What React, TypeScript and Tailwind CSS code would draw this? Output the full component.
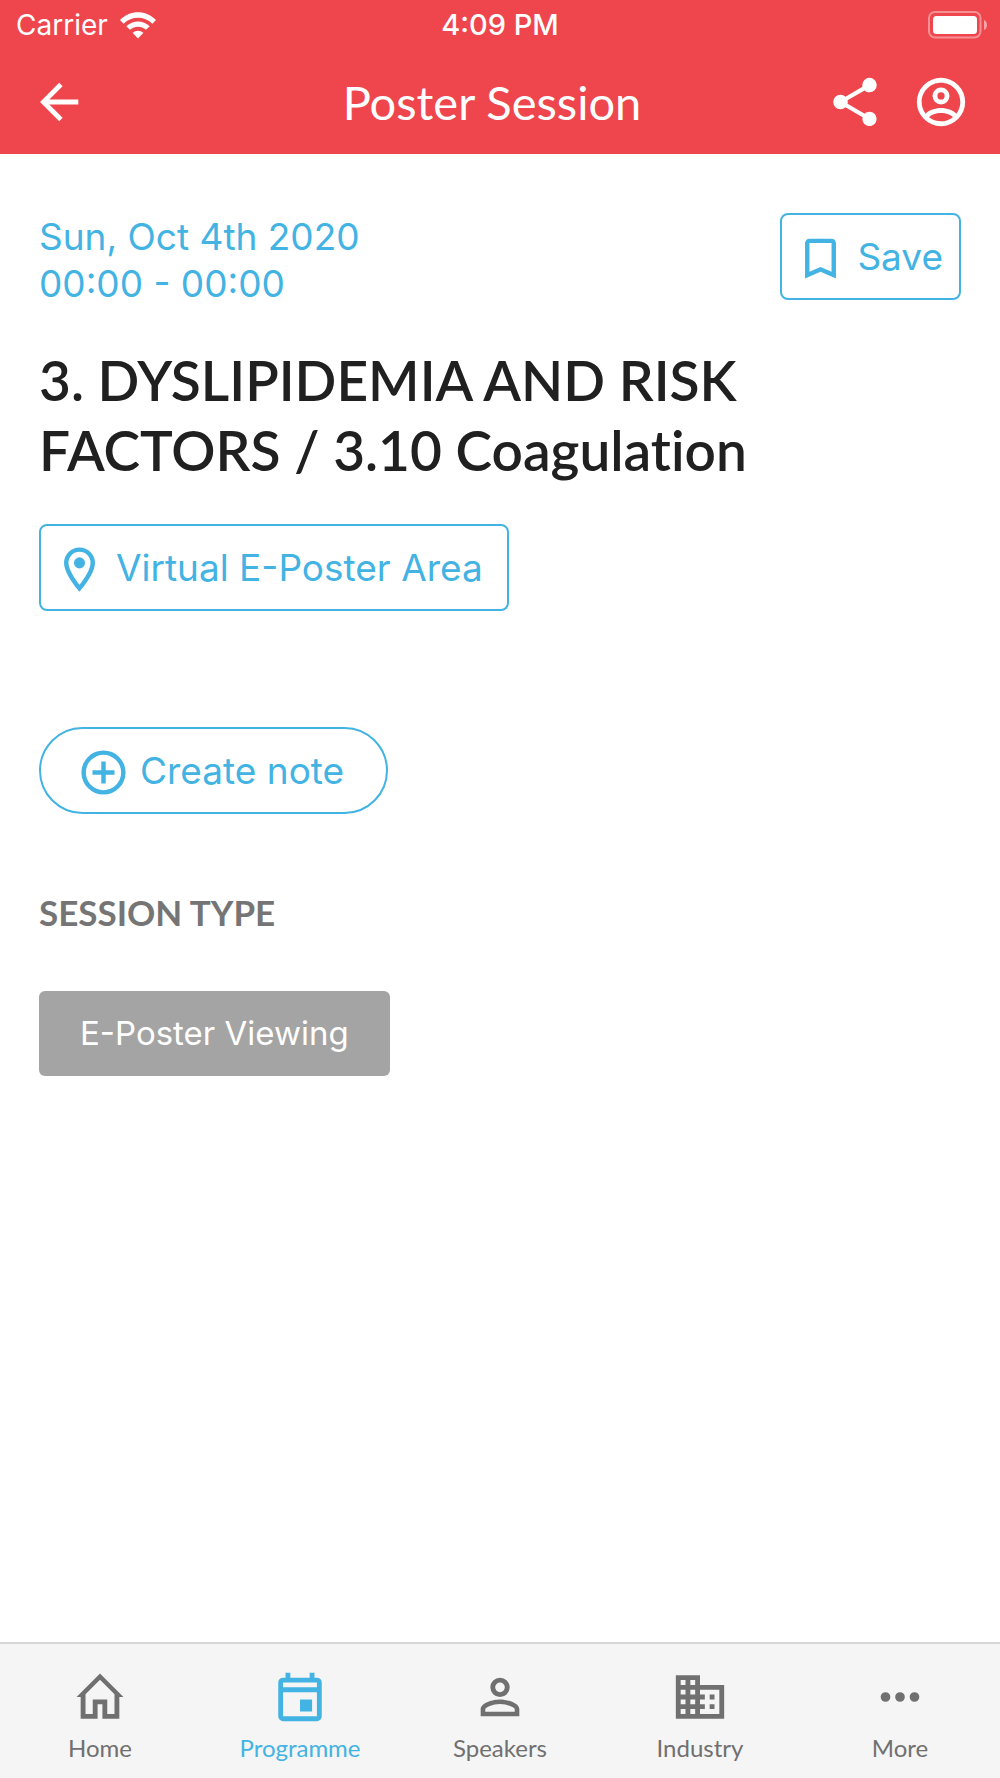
import React from 'react';

interface IconProps {
  path: string;
  className: string;
}

const Icon: React.FC<IconProps> = ({ path, className }) => (
  <svg viewBox="0 0 24 24" fill="currentColor" fillRule="evenodd" aria-hidden="true" className={className}>
    <path d={path} />
  </svg>
);

const icons = {
  back: 'M20 11v2H8l5.5 5.5-1.42 1.42L4.16 12l7.92-7.92L13.5 5.5 8 11z',
  share:
    'M18 16.08c-.76 0-1.44.3-1.96.77L8.91 12.7c.05-.23.09-.46.09-.7s-.04-.47-.09-.7l7.05-4.11c.54.5 1.25.81 2.04.81a3 3 0 1 0-3-3c0 .24.04.47.09.7L8.04 9.81C7.5 9.31 6.79 9 6 9a3 3 0 1 0 0 6c.79 0 1.5-.31 2.04-.81l7.12 4.15c-.05.21-.08.43-.08.66 0 1.61 1.31 2.92 2.92 2.92s2.92-1.31 2.92-2.92-1.31-2.92-2.92-2.92z',
  account:
    'M12 2a10 10 0 1 0 0 20 10 10 0 0 0 0-20zM7.07 18.28C7.5 17.38 10.12 16.5 12 16.5s4.5.88 4.93 1.78A7.9 7.9 0 0 1 12 20c-1.86 0-3.57-.64-4.93-1.72zM18.36 16.83c-1.43-1.74-4.9-2.33-6.36-2.33s-4.93.59-6.36 2.33A7.93 7.93 0 0 1 4 12c0-4.41 3.59-8 8-8s8 3.59 8 8c0 1.82-.62 3.5-1.64 4.83zM12 6a3.5 3.5 0 1 0 0 7 3.5 3.5 0 0 0 0-7zM12 11a1.5 1.5 0 1 1 0-3 1.5 1.5 0 0 1 0 3z',
  bookmark: 'M17 18l-5-2.18L7 18V5h10zM17 3H7a2 2 0 0 0-2 2v16l7-3 7 3V5a2 2 0 0 0-2-2z',
  pin: 'M12 2a7 7 0 0 0-7 7c0 5.25 7 13 7 13s7-7.75 7-13a7 7 0 0 0-7-7zM7 9a5 5 0 0 1 10 0c0 2.88-2.88 7.19-5 9.88C9.92 16.21 7 11.85 7 9zM12 6.5a2.5 2.5 0 1 0 0 5 2.5 2.5 0 0 0 0-5z',
  plus: 'M12 2a10 10 0 1 0 0 20 10 10 0 0 0 0-20zM12 4a8 8 0 1 1 0 16 8 8 0 0 1 0-16zM11 7v4H7v2h4v4h2v-4h4v-2h-4V7z',
  home: 'M12 2.3l9.7 9.7H20v9h-7v-6h-2v6H4v-9H2.3zM12 4.900L6 10.900V19H9V13H15V19H18V10.900z',
  programme:
    'M6 2v2H5a2 2 0 0 0-2 2v14a2 2 0 0 0 2 2h14a2 2 0 0 0 2-2V6a2 2 0 0 0-2-2h-1V2h-2v2H8V2zM5 6h14v2H5zM5 10h14v10H5zM12 13h5v5h-5z',
  speakers:
    'M12 4a4 4 0 1 0 0 8 4 4 0 0 0 0-8zM12 6a2 2 0 1 1 0 4 2 2 0 0 1 0-4zM12 13c2.67 0 8 1.33 8 4v3H4v-3c0-2.67 5.33-4 8-4zM12 14.9c-2.97 0-6.1 1.46-6.1 2.1v1.1h12.2V17c0-.64-3.13-2.1-6.1-2.1z',
  industry:
    'M2 3v18h20V7H12V3zM4 5h2v2H4zM8 5h2v2H8zM4 9h2v2H4zM8 9h2v2H8zM4 13h2v2H4zM8 13h2v2H8zM4 17h2v2H4zM8 17h2v2H8zM12 9h8v10h-8v-2h2v-2h-2v-2h2v-2h-2zM16 11h2v2h-2zM16 15h2v2h-2z',
  more: 'M4 12a2 2 0 1 0 4 0 2 2 0 0 0-4 0zM10 12a2 2 0 1 0 4 0 2 2 0 0 0-4 0zM16 12a2 2 0 1 0 4 0 2 2 0 0 0-4 0z',
};

const tabs = [
  { label: 'Home', icon: icons.home, active: false },
  { label: 'Programme', icon: icons.programme, active: true },
  { label: 'Speakers', icon: icons.speakers, active: false },
  { label: 'Industry', icon: icons.industry, active: false },
  { label: 'More', icon: icons.more, active: false },
];

const StatusBar: React.FC = () => (
  <div className="grid grid-cols-3 items-center h-[50px] px-3 text-[28px]">
    <div className="flex items-center gap-3 pl-1">
      <span>Carrier</span>
      <svg viewBox="0 0 36 27" className="w-9 h-[27px]" aria-hidden="true">
        <path fill="currentColor" d="M0 8C10-2.4 26-2.4 36 8l-3.600 3.700C24.200 3.800 11.800 3.800 3.600 11.700z" />
        <path fill="currentColor" d="M6.300 14.200c6.600-6.300 16.800-6.300 23.400 0L26 17.800c-4.600-4.200-11.400-4.200-16 0z" />
        <path fill="currentColor" d="M12.600 20.800c3.200-2.800 7.600-2.800 10.800 0L18 26.500z" />
      </svg>
    </div>
    <span className="text-center text-[29px] font-medium whitespace-nowrap">4:09 PM</span>
    <svg viewBox="0 0 60 28" className="w-[60px] h-7 justify-self-end" aria-hidden="true">
      <rect x="1" y="1" width="51.500" height="25.500" rx="6" fill="none" stroke="currentColor" strokeOpacity="0.4" strokeWidth="2" />
      <rect x="5" y="5" width="44" height="18" rx="3.500" fill="currentColor" />
      <path d="M56 9c4 1.500 4 8.500 0 10z" fill="currentColor" fillOpacity="0.5" />
    </svg>
  </div>
);

const App: React.FC = () => {
  return (
    <div className="min-h-screen flex flex-col bg-white font-[Inter,sans-serif] text-[#43b3e3]">
      <header className="bg-[#ef464d] text-white">
        <StatusBar />
        <div className="grid grid-cols-[1fr_auto_1fr] items-center h-[104px] pl-3.5 pr-[30px]">
          <button type="button" aria-label="Back" className="px-4 justify-self-start">
            <Icon path={icons.back} className="w-[58px] h-[58px]" />
          </button>
          <h1 className="font-[Lato,sans-serif] text-[47px] leading-[56px]">Poster Session</h1>
          <div className="flex justify-end gap-7">
            <button type="button" aria-label="Share">
              <Icon path={icons.share} className="w-[58px] h-[58px]" />
            </button>
            <button type="button" aria-label="Account">
              <Icon path={icons.account} className="w-[58px] h-[58px]" />
            </button>
          </div>
        </div>
      </header>

      <main className="flex-1 flex flex-col items-start px-[39px] pt-[59px] text-[37px] leading-[47px]">
        <div className="w-full flex justify-between items-start">
          <p>
            Sun, Oct 4th 2020
            <br />
            00:00 - 00:00
          </p>
          <button type="button" className="flex items-center gap-2.5 h-[87px] pl-3 pr-4 border-2 border-[#43b3e3] rounded-lg">
            <Icon path={icons.bookmark} className="w-[53px] h-[53px] mt-1" />
            Save
          </button>
        </div>

        <h2 className="mt-[38px] max-w-[760px] font-[Lato,sans-serif] font-semibold text-[55px] leading-[70px] text-[#202020] [font-variant-ligatures:none]">
          3. DYSLIPIDEMIA AND RISK FACTORS / 3.10 Coagulation
        </h2>

        <button type="button" className="mt-[39px] flex items-center gap-2.5 h-[87px] pl-3 pr-6 border-2 border-[#43b3e3] rounded-lg">
          <Icon path={icons.pin} className="w-[53px] h-[53px] mt-1" />
          Virtual E-Poster Area
        </button>

        <button type="button" className="mt-[116px] flex items-center gap-2.5 h-[87px] pl-9 pr-[42px] border-2 border-[#43b3e3] rounded-full">
          <Icon path={icons.plus} className="w-[53px] h-[53px] mt-1" />
          Create note
        </button>

        <h3 className="mt-[78px] font-[Lato,sans-serif] font-bold text-[35px] leading-10 text-[#757575]">SESSION TYPE</h3>
        <span className="mt-[59px] px-[41px] rounded-md bg-[#a4a4a4] text-white text-[33px] leading-[85px]">E-Poster Viewing</span>
      </main>

      <nav className="grid grid-cols-5 h-[136px] pt-6 border-t-2 border-[#d6d6d6] bg-[#f5f5f5] font-[Lato,sans-serif] text-2xl">
        {tabs.map((tab) => (
          <a
            key={tab.label}
            href="#"
            aria-current={tab.active ? 'page' : undefined}
            className={tab.active ? 'flex flex-col items-center gap-1.5 text-[#43b3e3]' : 'flex flex-col items-center gap-1.5 text-[#707070]'}
          >
            <Icon path={tab.icon} className="w-[58px] h-[58px]" />
            {tab.label}
          </a>
        ))}
      </nav>
    </div>
  );
};

export default App;
